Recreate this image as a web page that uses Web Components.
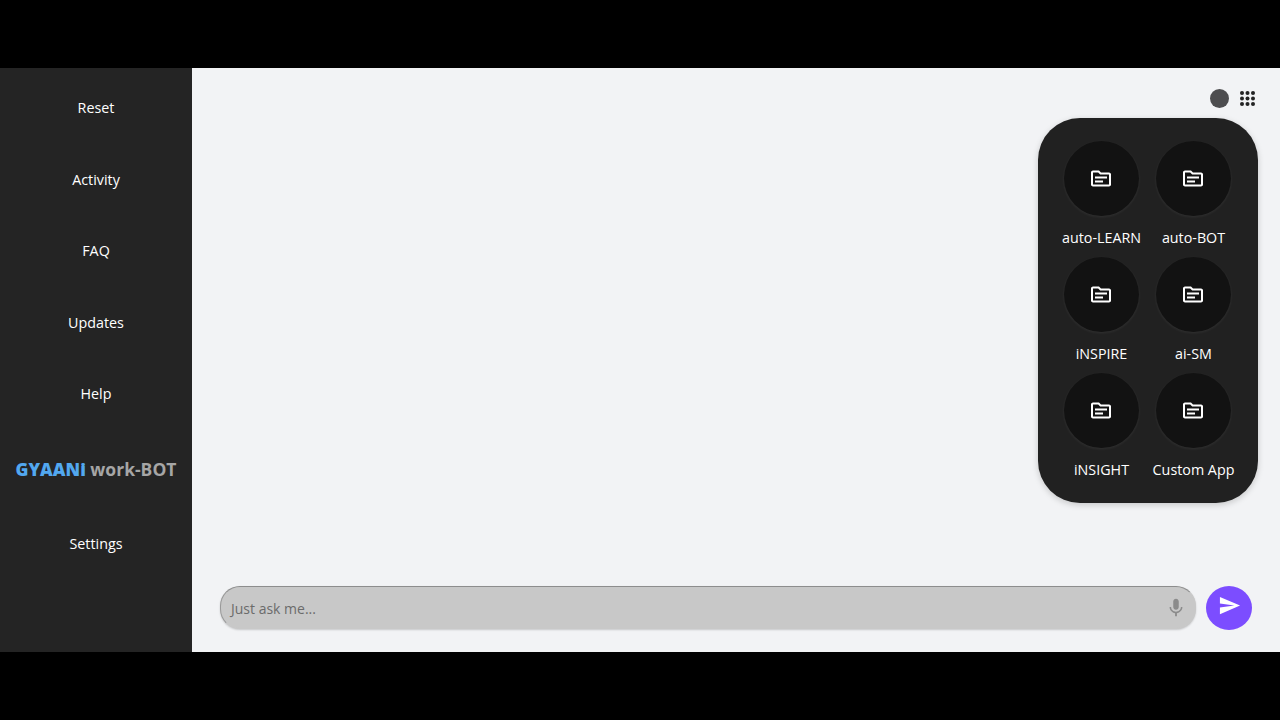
<!DOCTYPE html>
<html>
<head>
<meta charset="utf-8">
<title>GYAANi work-BOT</title>
<style>
  html, body { margin: 0; height: 100%; background: #000; overflow: hidden; }
  body { padding: 68px 0; box-sizing: border-box; font-family: 'Open Sans', 'Noto Sans', sans-serif; }
</style>
</head>
<body>
<bot-shell>
  <side-bar slot="side"></side-bar>
  <top-tools slot="tools"></top-tools>
  <app-panel slot="panel">
    <app-tile>auto-LEARN</app-tile>
    <app-tile>auto-BOT</app-tile>
    <app-tile>iNSPIRE</app-tile>
    <app-tile>ai-SM</app-tile>
    <app-tile>iNSIGHT</app-tile>
    <app-tile>Custom App</app-tile>
  </app-panel>
  <chat-input slot="input"></chat-input>
</bot-shell>
<script>
// Page frame: sidebar on the left, main column on the right
class BotShell extends HTMLElement {
  constructor() {
    super();
    this.attachShadow({mode: 'open'}).innerHTML = `
      <style>
        :host { display: flex; width: 1280px; height: 584px; background: #f2f3f5; }
        .main { flex: 1; display: flex; flex-direction: column; min-width: 0; padding: 20px 22px 22px 28px; box-sizing: border-box; }
        .head { display: flex; flex-direction: column; align-items: flex-end; gap: 9px; flex: 1; }
      </style>
      <slot name="side"></slot>
      <div class="main">
        <div class="head">
          <slot name="tools"></slot>
          <slot name="panel"></slot>
        </div>
        <slot name="input"></slot>
      </div>`;
  }
}
customElements.define('bot-shell', BotShell);

class SideBar extends HTMLElement {
  constructor() {
    super();
    this.attachShadow({mode: 'open'}).innerHTML = `
      <style>
        :host { display: block; width: 192px; height: 584px; background: #242424; color: #fff; font-size: 14.3px; }
        .col { display: flex; flex-direction: column; align-items: center; padding-top: 30px; }
        .item { height: 20px; line-height: 20px; margin-bottom: 51.6px; }
        .brand { height: 24px; line-height: 24px; font-size: 17.5px; font-weight: 700; color: #a6a6a6; margin: 1px 0 53.5px; white-space: nowrap; }
        .brand b { color: #52a8f0; }
      </style>
      <div class="col">
        <div class="item">Reset</div>
        <div class="item">Activity</div>
        <div class="item">FAQ</div>
        <div class="item">Updates</div>
        <div class="item">Help</div>
        <div class="brand"><b>GYAANi</b> work-BOT</div>
        <div class="item">Settings</div>
      </div>`;
  }
}
customElements.define('side-bar', SideBar);

class TopTools extends HTMLElement {
  constructor() {
    super();
    let dots = '';
    [0, 5.5, 11].forEach(y => [0, 5.5, 11].forEach(x => {
      dots += `<circle cx="${x + 2}" cy="${y + 2}" r="2"/>`;
    }));
    this.attachShadow({mode: 'open'}).innerHTML = `
      <style>
        :host { display: flex; align-items: center; gap: 11px; height: 21px; margin-right: 3px; }
        .dot { width: 19px; height: 19px; border-radius: 50%; background: #4d4d4f; }
        svg { width: 15px; height: 15px; fill: #232323; display: block; }
      </style>
      <div class="dot"></div>
      <svg viewBox="0 0 15 15">${dots}</svg>`;
  }
}
customElements.define('top-tools', TopTools);

class AppPanel extends HTMLElement {
  constructor() {
    super();
    this.attachShadow({mode: 'open'}).innerHTML = `
      <style>
        :host { display: grid; grid-template-columns: 75px 75px; grid-auto-rows: 116.2px; column-gap: 17px; justify-content: start;
          width: 220px; height: 385px; box-sizing: border-box; padding: 23px 0 0 26px; border-radius: 42px; background: #212121;
          box-shadow: 0 2px 6px rgba(0,0,0,.18); }
      </style>
      <slot></slot>`;
  }
}
customElements.define('app-panel', AppPanel);

class AppTile extends HTMLElement {
  constructor() {
    super();
    this.attachShadow({mode: 'open'}).innerHTML = `
      <style>
        :host { display: flex; flex-direction: column; align-items: center; color: #fff; font-size: 14.3px; }
        .ball { flex: none; width: 75px; height: 75px; border-radius: 50%; background: #121212; display: flex; align-items: center; justify-content: center;
          box-shadow: 0 1px 3px rgba(255,255,255,.08); }
        svg { width: 24px; height: 24px; display: block; fill: #fff; transform: translate(-1px, -0.5px); }
        .name { margin-top: 12px; line-height: 20px; white-space: nowrap; }
      </style>
      <div class="ball">
        <svg viewBox="0 0 24 24">
          <path d="M20 6h-8l-2-2H4C2.900 4 2.010 4.900 2.010 6L2 18c0 1.100.9 2 2 2h16c1.100 0 2-.9 2-2V8c0-1.100-.9-2-2-2zm0 12H4V6h5.170l2 2H20v10zM18 12H6v-2h12v2zm-4 4H6v-2h8v2z"/>
        </svg>
      </div>
      <div class="name"><slot></slot></div>`;
  }
}
customElements.define('app-tile', AppTile);

class ChatInput extends HTMLElement {
  constructor() {
    super();
    this.attachShadow({mode: 'open'}).innerHTML = `
      <style>
        :host { display: flex; align-items: flex-start; gap: 10px; height: 44px; margin-right: 6px; }
        .box { flex: 1; height: 43px; box-sizing: border-box; display: flex; align-items: center; padding: 1px 10px 0 10px; border-radius: 20px;
          background: #c8c8c8; border: 1px solid #c8c8c8; border-top-color: #8d8d8d; border-left-color: #999;
          box-shadow: 0 1px 2px rgba(0,0,0,.18); color: #6b6b6b; font-size: 14px; }
        .box span { flex: 1; }
        .mic { width: 22px; height: 22px; display: block; fill: #8b8b8b; margin: 0 -2px 0 0; }
        .send { width: 46px; height: 44px; display: flex; align-items: center; justify-content: center; border-radius: 50%; background: #7c4dff; }
        .send svg { width: 23px; height: 23px; display: block; transform: translate(0, -3px); }
      </style>
      <div class="box">
        <span>Just ask me...</span>
        <svg class="mic" viewBox="0 0 24 24">
          <path d="M12 14c1.660 0 2.990-1.340 2.990-3L15 5c0-1.660-1.340-3-3-3S9 3.340 9 5v6c0 1.660 1.340 3 3 3zm5.300-3c0 3-2.540 5.100-5.300 5.100S6.700 14 6.700 11H5c0 3.410 2.720 6.230 6 6.720V21h2v-3.280c3.280-.48 6-3.300 6-6.720h-1.700z"/>
        </svg>
      </div>
      <div class="send">
        <svg viewBox="0 0 24 24"><path d="M2.010 21L23 12 2.010 3 2 10l15 2-15 2z" fill="#fff"/></svg>
      </div>`;
  }
}
customElements.define('chat-input', ChatInput);
</script>
</body>
</html>
